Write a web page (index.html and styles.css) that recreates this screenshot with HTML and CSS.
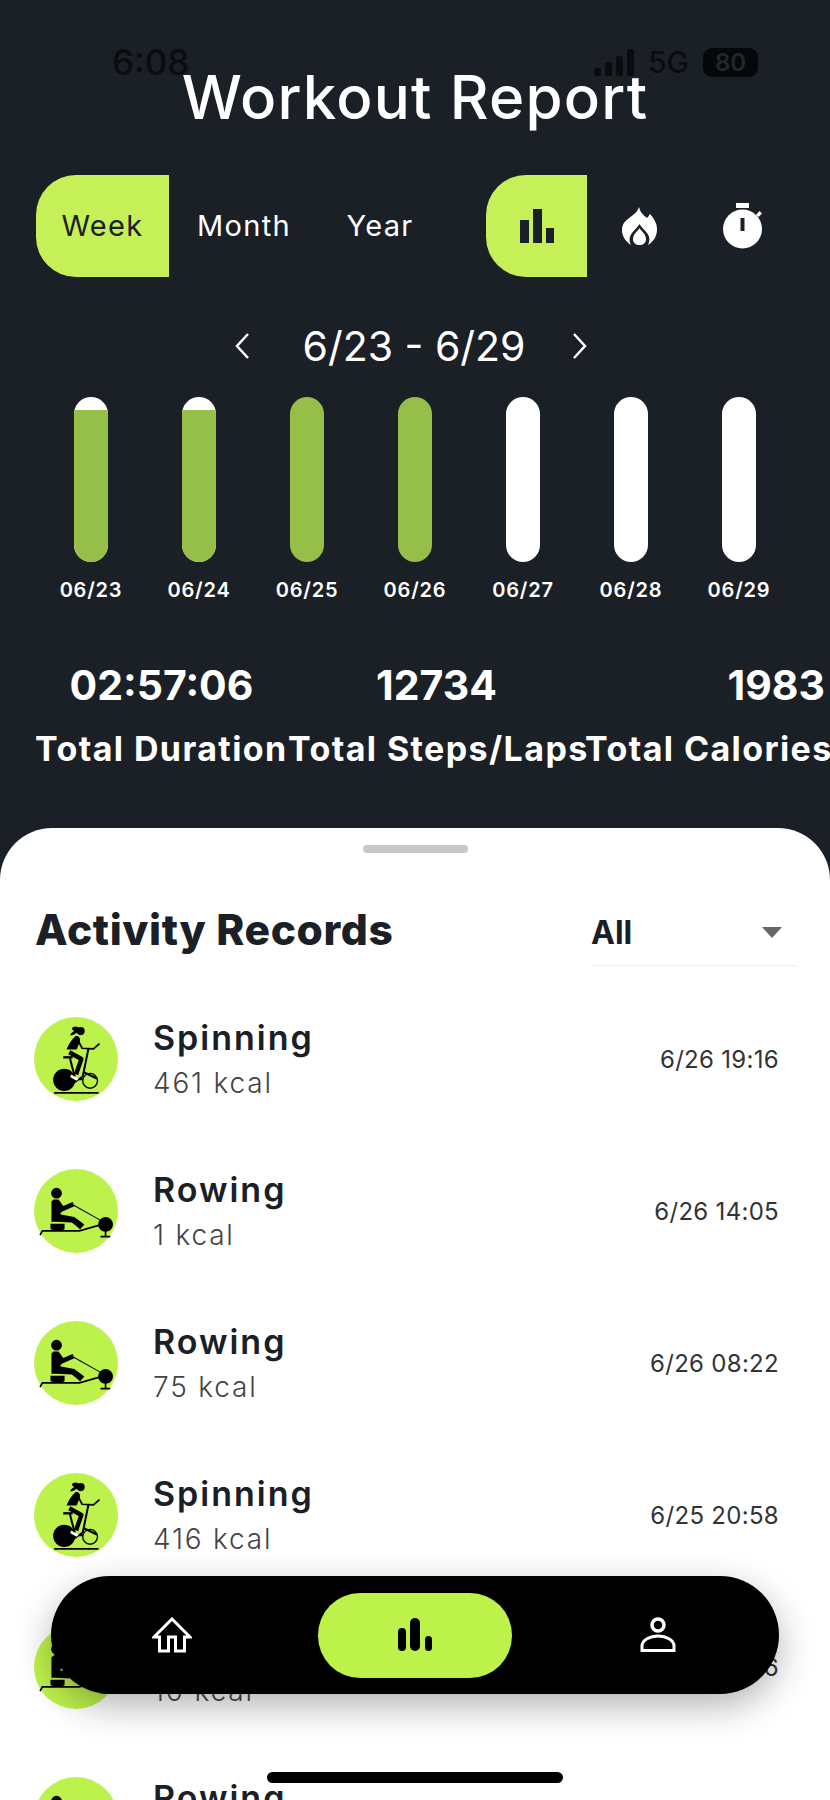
FILE: index.html
```html
<!DOCTYPE html>
<html lang="en">
<head>
    <meta charset="UTF-8">
    <meta name="viewport" content="width=device-width, initial-scale=1.0">
    <title>Workout Report</title>
    <link rel="stylesheet" href="styles.css">
</head>
<body>

<!-- shared activity icons -->
<svg class="defs" width="0" height="0">
    <symbol id="spin" viewBox="45 55 250 250">
        <circle cx="170" cy="180" r="125" fill="#bdf24c"/>
        <path d="M105 281H237" stroke="#000" stroke-width="5" fill="none"/>
        <circle cx="135" cy="242" r="33" fill="#000"/>
        <circle cx="212" cy="245" r="22" stroke="#000" stroke-width="4" fill="none"/>
        <path d="M207 150L190 232M190 218L232 238M190 232L150 260M152 178L168 240L190 240" stroke="#000" stroke-width="6" fill="none"/>
        <circle cx="184" cy="97" r="12" fill="#000"/>
        <path d="M178 86C162 78 150 92 166 97C158 100 154 105 153 110C164 110 172 104 176 97Z" fill="#000"/>
        <path d="M170 111C180 111 184 120 181 130L172 152H142C148 135 158 120 170 111Z" fill="#000"/>
        <path d="M150 160L186 180L170 226" stroke="#000" stroke-width="13" fill="none" stroke-linejoin="round"/>
        <path d="M174 120L188 148L222 150L240 134" stroke="#000" stroke-width="5" fill="none"/>
        <path d="M132 175H160" stroke="#000" stroke-width="7" fill="none"/>
        <path d="M155 226L178 238L172 245L153 234Z" fill="#fff"/>
    </symbol>
    <symbol id="row" viewBox="45 55 250 250">
        <circle cx="170" cy="180" r="125" fill="#bdf24c"/>
        <circle cx="112" cy="127" r="16" fill="#000"/>
        <path d="M103 146H118L132 165L160 153L165 166L128 182L122 190L165 198L195 220L182 234L158 214L110 212H97V152Z" fill="#000"/>
        <path d="M94 218H136V232C136 240 96 240 94 232Z" fill="#000"/>
        <path d="M63 252L70 239H180L240 222" stroke="#000" stroke-width="5" fill="none"/>
        <path d="M162 162L242 207" stroke="#000" stroke-width="3" fill="none"/>
        <circle cx="258" cy="220" r="22" fill="#000"/>
        <path d="M258 240V255M243 256H272" stroke="#000" stroke-width="5" fill="none"/>
    </symbol>
</svg>

<div class="screen">

    <div class="status">
        <span class="clock">6:08</span>
        <div class="status-right">
            <div class="signal"><i></i><i></i><i></i><i></i></div>
            <span class="net">5G</span>
            <span class="battery">80</span>
        </div>
    </div>

    <div class="report">
        <h1>Workout Report</h1>

        <div class="filters">
            <div class="tabs">
                <span class="tab tab-on">Week</span>
                <span class="tab tab-month">Month</span>
                <span class="tab tab-year">Year</span>
            </div>
            <div class="metrics">
                <span class="metric metric-on">
                    <svg width="34" height="34" viewBox="0 0 34 34"><path d="M0 11H9V34H0ZM13 0H22V34H13ZM26 19H34V34H26Z" fill="#1b2027"/></svg>
                </span>
                <span class="metric">
                    <svg width="35" height="39" viewBox="0 0 35 39"><path fill-rule="evenodd" d="M17 0C18 5 21 8 25 11C27 9 27 8 28 7C32 12 35 16 35 22C35 29 32 34 26 38C28 34 28 30 25 26C23 23 20 21 17.500 17C15 21 12 23 10 26C7 30 7 34 9 38C3 34 0 29 0 23C0 15 6 12 11 8C14 6 16 3 17 0Z" fill="#fff"/><path d="M17.500 21C19 24 24 27 24 32C24 36 21 38 17.500 38C14 38 11 36 11 32C11 27 16 24 17.500 21Z" fill="#fff"/></svg>
                </span>
                <span class="metric">
                    <svg width="40" height="46" viewBox="0 0 40 46"><path d="M13 0H26V5H13Z" fill="#fff"/><circle cx="19.500" cy="26" r="19.500" fill="#fff"/><path d="M33 12L36.500 8L39 10.500L35.500 14Z" fill="#fff"/><path d="M17.500 15H21.500V28H17.500Z" fill="#1b2027"/></svg>
                </span>
            </div>
        </div>

        <div class="range">
            <svg width="16" height="28" viewBox="0 0 16 28"><path d="M14 2L3 14L14 26" stroke="#fff" stroke-width="2.500" fill="none"/></svg>
            <span class="range-text">6/23 - 6/29</span>
            <svg width="16" height="28" viewBox="0 0 16 28"><path d="M2 2L13 14L2 26" stroke="#fff" stroke-width="2.500" fill="none"/></svg>
        </div>

        <div class="chart">
            <div class="day"><div class="bar"><div class="fill" style="height: 92%"></div></div><span>06/23</span></div>
            <div class="day"><div class="bar"><div class="fill" style="height: 92%"></div></div><span>06/24</span></div>
            <div class="day"><div class="bar"><div class="fill" style="height: 100%"></div></div><span>06/25</span></div>
            <div class="day"><div class="bar"><div class="fill" style="height: 100%"></div></div><span>06/26</span></div>
            <div class="day"><div class="bar"></div><span>06/27</span></div>
            <div class="day"><div class="bar"></div><span>06/28</span></div>
            <div class="day"><div class="bar"></div><span>06/29</span></div>
        </div>

        <div class="totals">
            <div class="total total-time"><strong>02:57:06</strong><span>Total Duration</span></div>
            <div class="total total-steps"><strong>12734</strong><span>Total Steps/Laps</span></div>
            <div class="total total-cal"><strong>1983</strong><span>Total Calories</span></div>
        </div>
    </div>

    <div class="sheet">
        <div class="handle"></div>
        <div class="sheet-head">
            <h2>Activity Records</h2>
            <div class="select"><span>All</span><i class="caret"></i></div>
        </div>

        <div class="record">
            <svg class="record-icon"><use href="#spin"/></svg>
            <div class="record-main"><b>Spinning</b><span>461 kcal</span></div>
            <time>6/26 19:16</time>
        </div>
        <div class="record">
            <svg class="record-icon"><use href="#row"/></svg>
            <div class="record-main"><b>Rowing</b><span>1 kcal</span></div>
            <time>6/26 14:05</time>
        </div>
        <div class="record">
            <svg class="record-icon"><use href="#row"/></svg>
            <div class="record-main"><b>Rowing</b><span>75 kcal</span></div>
            <time>6/26 08:22</time>
        </div>
        <div class="record">
            <svg class="record-icon"><use href="#spin"/></svg>
            <div class="record-main"><b>Spinning</b><span>416 kcal</span></div>
            <time>6/25 20:58</time>
        </div>
        <div class="record">
            <svg class="record-icon"><use href="#row"/></svg>
            <div class="record-main"><b>Rowing</b><span>10 kcal</span></div>
            <time>6/25 17:36</time>
        </div>
        <div class="record">
            <svg class="record-icon"><use href="#row"/></svg>
            <div class="record-main"><b>Rowing</b><span>52 kcal</span></div>
            <time>6/25 08:10</time>
        </div>
    </div>

    <!-- floating nav, lies over the list -->
    <nav class="nav">
        <span class="nav-item">
            <svg width="40" height="36" viewBox="0 0 40 36"><path d="M20 2L38 20H32.500V34H23.500V20H16.500V34H7.500V20H2Z" stroke="#fff" stroke-width="3" fill="none" stroke-linejoin="miter"/></svg>
        </span>
        <span class="nav-item nav-on">
            <svg width="34" height="34" viewBox="0 0 34 34"><rect x="0" y="10" width="8" height="23" rx="4" fill="#000"/><rect x="12" y="0" width="10" height="33" rx="5" fill="#000"/><rect x="27" y="18" width="7" height="15" rx="3.500" fill="#000"/></svg>
        </span>
        <span class="nav-item">
            <svg width="36" height="36" viewBox="0 0 36 36"><circle cx="18" cy="8" r="6" stroke="#fff" stroke-width="3.500" fill="none"/><path d="M2 33.500V29C2 23 10 19 18 19C26 19 34 23 34 29V33.500Z" stroke="#fff" stroke-width="3" fill="none"/></svg>
        </span>
    </nav>

    <div class="home-bar"></div>
</div>

</body>
</html>
```

FILE: styles.css
```css
* {
    box-sizing: border-box;
}
body {
    margin: 0;
    background-color: #fff;
    font-family: Inter, "Liberation Sans", sans-serif;
    color: #1b2027;
}
.defs {
    position: absolute;
}
.screen {
    position: relative;
    width: 830px;
    height: 1800px;
    overflow: hidden;
    background-color: #1b2027;
}

/* status bar */
.status {
    position: absolute;
    top: 40px;
    left: 112px;
    right: 72px;
    display: flex;
    justify-content: space-between;
    align-items: center;
    height: 44px;
    color: #0a0d10;
}
.clock {
    font-size: 35px;
    font-weight: 500;
}
.status-right {
    display: flex;
    align-items: center;
    gap: 14px;
}
.signal {
    display: flex;
    align-items: flex-end;
    gap: 4px;
    height: 27px;
}
.signal i {
    width: 7px;
    background-color: #0a0d10;
    border-radius: 2px;
}
.signal i:nth-child(1) { height: 8px; }
.signal i:nth-child(2) { height: 14px; }
.signal i:nth-child(3) { height: 20px; }
.signal i:nth-child(4) { height: 27px; }
.net {
    font-size: 30px;
    font-weight: 500;
}
.battery {
    width: 55px;
    height: 29px;
    border-radius: 9px;
    background-color: #05070a;
    color: #22272d;
    font-size: 24px;
    font-weight: 600;
    line-height: 29px;
    text-align: center;
}

/* top part */
.report {
    height: 828px;
    padding-top: 64px;
    color: #fff;
}
h1 {
    margin: 0;
    font-size: 60px;
    font-weight: 500;
    line-height: 66px;
    letter-spacing: 1.2px;
    text-align: center;
}
.filters {
    display: flex;
    justify-content: space-between;
    margin-top: 45px;
    padding: 0 35px 0 36px;
}
.tabs, .metrics {
    display: flex;
}
.tab {
    width: 133px;
    height: 102px;
    font-size: 29px;
    line-height: 102px;
    letter-spacing: 1.3px;
    text-align: center;
}
.tab-on {
    background-color: #c6f057;
    border-radius: 40px 0 0 40px;
    color: #1b2027;
}
.tab-month {
    width: 150px;
}
.tab-year {
    width: 122px;
}
.metric {
    display: flex;
    align-items: center;
    justify-content: center;
    width: 104px;
    height: 102px;
}
.metric-on {
    width: 101px;
    background-color: #c6f057;
    border-radius: 40px 0 0 40px;
}
.range {
    display: flex;
    justify-content: center;
    align-items: center;
    gap: 46px;
    height: 50px;
    margin-top: 44px;
    padding-right: 8px;
}
.range-text {
    margin-left: 6px;
    font-size: 41px;
    line-height: 50px;
}
.chart {
    display: grid;
    grid-template-columns: repeat(7, 108px);
    margin: 26px 0 0 37px;
}
.day {
    display: flex;
    flex-direction: column;
    align-items: center;
    gap: 16px;
}
.day span {
    font-size: 20px;
    font-weight: 600;
    line-height: 24px;
    letter-spacing: 0.8px;
}
.bar {
    display: flex;
    align-items: flex-end;
    width: 34px;
    height: 165px;
    border-radius: 17px;
    background-color: #fff;
    overflow: hidden;
}
.fill {
    width: 100%;
    background-color: #96bf4a;
}
.totals {
    display: flex;
    margin-top: 55px;
    padding-left: 35px;
}
.total {
    display: flex;
    flex-direction: column;
    flex: none;
    white-space: nowrap;
}
.total strong {
    font-size: 41px;
    font-weight: 700;
    line-height: 56px;
}
.total span {
    margin-top: 14px;
    font-size: 34px;
    font-weight: 700;
    line-height: 44px;
    letter-spacing: 1.4px;
    text-align: left;
}
.total-time {
    width: 253px;
    text-align: center;
}
.total-steps {
    width: 297px;
    text-align: center;
}
.total-cal {
    width: 240px;
    text-align: right;
}

/* white sheet */
.sheet {
    height: 972px;
    background-color: #fff;
    border-radius: 52px 52px 0 0;
    padding-top: 17px;
}
.handle {
    width: 105px;
    height: 8px;
    margin: 0 auto;
    border-radius: 4px;
    background-color: #c8c8c8;
}
.sheet-head {
    display: flex;
    justify-content: space-between;
    align-items: flex-start;
    height: 83px;
    margin-top: 47px;
    padding: 0 34px 0 35px;
}
h2 {
    margin: 0;
    font-size: 42.5px;
    font-weight: 800;
    line-height: 60px;
    letter-spacing: 0.6px;
}
.select {
    display: flex;
    justify-content: space-between;
    align-items: center;
    width: 205px;
    height: 66px;
    padding: 0 14px 0 0;
    border-bottom: 1px solid #eeeeee;
    font-size: 32px;
    font-weight: 700;
}
.caret {
    width: 0;
    height: 0;
    border-left: 10px solid transparent;
    border-right: 10px solid transparent;
    border-top: 11px solid #666;
}
.record {
    display: flex;
    align-items: center;
    height: 152px;
    padding: 0 51px 0 34px;
}
.record-icon {
    width: 84px;
    height: 84px;
    flex: none;
}
.record-main {
    display: flex;
    flex-direction: column;
    flex: 1;
    margin-left: 35px;
}
.record-main b {
    font-size: 34px;
    font-weight: 600;
    line-height: 46px;
    letter-spacing: 2px;
}
.record-main span {
    margin-top: 2px;
    color: #444;
    font-size: 28px;
    font-weight: 300;
    line-height: 40px;
    letter-spacing: 1.8px;
}
time {
    color: #333;
    font-size: 24px;
    letter-spacing: 0.3px;
}

/* floating nav */
.nav {
    position: absolute;
    left: 51px;
    top: 1576px;
    display: flex;
    align-items: center;
    justify-content: space-between;
    width: 728px;
    height: 118px;
    padding: 0 46px 0 46px;
    background-color: #000;
    border-radius: 59px;
    box-shadow: 0 12px 36px rgba(0, 0, 0, 0.3);
}
.nav-item {
    display: flex;
    align-items: center;
    justify-content: center;
    width: 150px;
    height: 85px;
}
.nav-on {
    width: 194px;
    background-color: #bcf24a;
    border-radius: 42px;
}
.home-bar {
    position: absolute;
    left: 267px;
    top: 1772px;
    width: 296px;
    height: 11px;
    border-radius: 6px;
    background-color: #000;
}
```
